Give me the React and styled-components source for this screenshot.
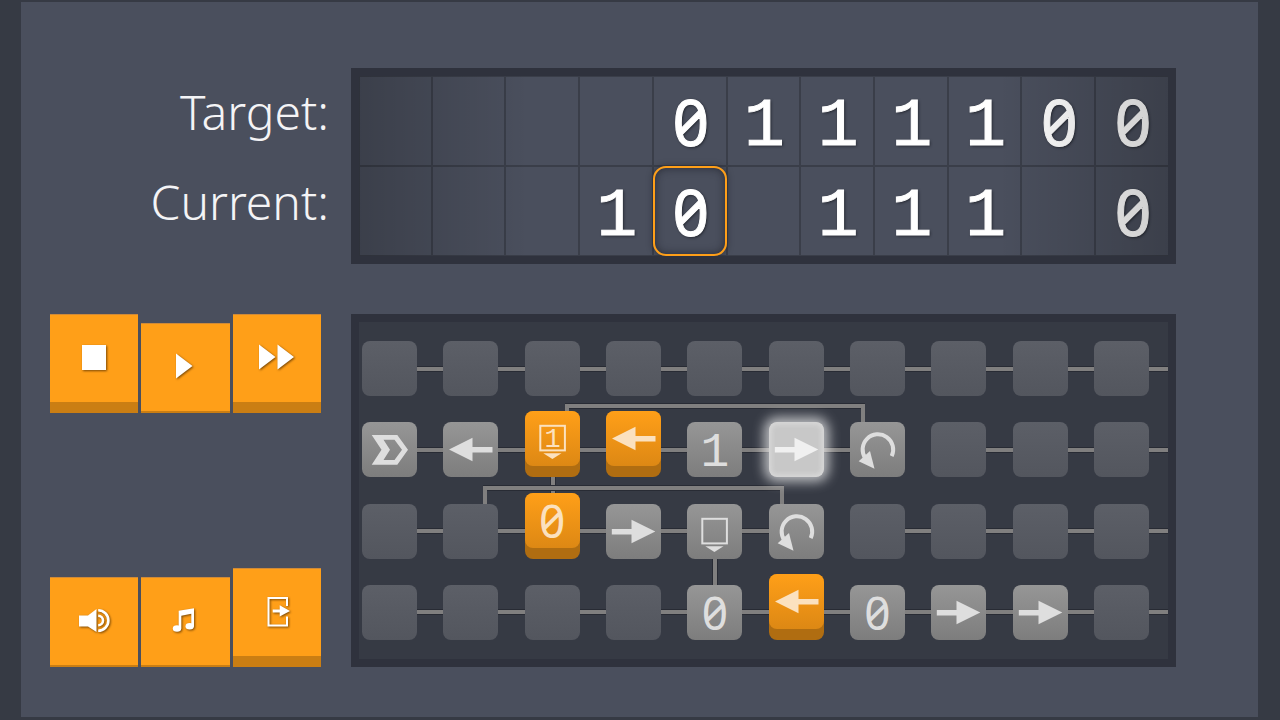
import React, { useState } from 'react'
import styled, { createGlobalStyle, css } from 'styled-components'

const GlobalStyle = createGlobalStyle`
* {
    box-sizing: border-box;
}
body {
    margin: 0;
    background-color: #363a44;
    font-family: "Noto Sans", "Open Sans", sans-serif;
}
`

const Page = styled.div`
    min-height: 100vh;
    padding: 2px 22px 3px 21px;
    display: flex;
`
const Board = styled.main`
    flex: 1;
    display: grid;
    grid-template-columns: 271px minmax(0, 1fr);
    grid-template-rows: auto 1fr;
    column-gap: 30px;
    row-gap: 50px;
    padding: 66px 82px 50px 29px;
    background-color: #4a4f5d;
`
const Labels = styled.div`
    display: flex;
    flex-direction: column;
    align-items: flex-end;
    margin-right: -8px;
`
const Label = styled.span`
    height: 90px;
    line-height: 88px;
    font-size: 48px;
    font-weight: 300;
    color: #f4f4f6;
`
const Panel = styled.section`
    border: 8px solid #2f323d;
`

/* tape */
const TapePanel = styled(Panel)`
    position: relative;
    overflow: hidden;

    &::after {
        content: "";
        position: absolute;
        inset: 0;
        pointer-events: none;
        background:
            linear-gradient(to right, rgba(0, 0, 0, 0.2), rgba(0, 0, 0, 0) 170px),
            linear-gradient(to left, rgba(0, 0, 0, 0.2), rgba(0, 0, 0, 0) 170px);
    }
`
const Tape = styled.table`
    width: calc(100% + 2px);
    table-layout: fixed;
    border-collapse: separate;
    border-spacing: 0;
    border-top: 1px solid #3a3e49;
`
const Cell = styled.td`
    position: relative;
    height: 90px;
    padding: 0;
    border-right: 2px solid #3a3e49;
    border-bottom: 2px solid #3a3e49;
    text-align: center;

    &:first-child {
        border-left: 1px solid #3a3e49;
    }

    tr:last-child > & {
        height: 89px;
        border-bottom-width: 1px;
    }

    ${(p) => p.$head && css`
        &::after {
            content: "";
            position: absolute;
            inset: -1px -1px -1px -1px;
            border: 2px solid #ff9f18;
            border-radius: 13px;
            box-shadow: 0 0 6px rgba(20, 22, 30, 0.5), inset 0 0 8px rgba(20, 22, 30, 0.6);
        }
    `}
`
const Digit = styled.span`
    display: block;
    height: 88px;
    padding-left: 2px;
    font-family: ${(p) => (p.$zero ? '"Noto Sans"' : '"Liberation Mono"')}, monospace;
    font-variant-numeric: slashed-zero;
    font-size: ${(p) => (p.$zero ? 64 : 68)}px;
    line-height: ${(p) => (p.$zero ? 90 : 100)}px;
    color: #fff;
    -webkit-text-stroke: 1px #fff;
    text-shadow: 1px 1px 3px rgba(15, 17, 24, 0.8);
`

/* control buttons */
const Controls = styled.div`
    display: flex;
    flex-direction: column;
    justify-content: space-between;
`
const ControlRow = styled.div`
    display: grid;
    grid-template-columns: repeat(3, 1fr);
    gap: 3px;
    height: 99px;
    align-items: end;
`
const ControlButton = styled.button`
    display: flex;
    align-items: center;
    justify-content: center;
    height: ${(p) => (p.$down ? 90 : 99)}px;
    padding: 0 0 3px;
    border: none;
    border-top: 1px solid #cf8a38;
    border-bottom: ${(p) => (p.$down ? 2 : 11)}px solid #ca7e13;
    background-color: #ff9f18;
    color: #fff;
    cursor: pointer;

    svg {
        width: 40px;
        height: 40px;
        filter: drop-shadow(1px 1px 1px rgba(90, 50, 0, 0.8));
    }
`

/* program */
const ProgramPanel = styled(Panel)`
    display: flex;
    flex-direction: column;
    justify-content: space-between;
    padding: 19px 0 19px 3px;
    background-color: #363a44;
`
const Row = styled.div`
    display: grid;
    grid-template-columns: repeat(9, 1fr) 74px;
    height: 55px;
`
const Slot = styled.div`
    position: relative;
    display: flex;
    align-items: center;
`
const Link = styled.div`
    flex: 1;
    height: 4px;
    background-color: #807f7f;
    box-shadow: 0 -1px 0 #282b34, 0 1px 0 #282b34;
`
const LoopWire = styled.div`
    position: absolute;
    top: -18px;
    left: calc(-100% * ${(p) => p.$span} + 40px);
    width: calc(100% * ${(p) => p.$span} - 25px);
    height: 18px;
    border: 4px solid #807f7f;
    border-bottom: none;
    box-shadow: 0 -1px 0 #282b34, inset 0 1px 0 #282b34;
`
const BranchWire = styled.div`
    position: absolute;
    top: 55px;
    left: 26px;
    width: 4px;
    height: 27px;
    background-color: #807f7f;
    box-shadow: -1px 0 0 #282b34, 1px 0 0 #282b34;
`
const faces = {
    empty: 'linear-gradient(#5c5f67, #53565e)',
    locked: 'linear-gradient(#969696, #7d7d7d)',
    user: 'linear-gradient(#ff9f18, #dd8814)',
    active: '#c8c8c8',
}
const Tile = styled.button`
    position: relative;
    z-index: 1;
    flex: none;
    width: 55px;
    height: ${(p) => (p.$kind === 'user' ? 66 : 55)}px;
    margin-top: ${(p) => (p.$kind === 'user' ? -11 : 0)}px;
    padding: 0;
    border: none;
    border-radius: 8px;
    background-color: ${(p) => (p.$kind === 'user' ? '#b06d11' : 'transparent')};
    color: ${(p) => (p.$kind === 'user' ? '#fbe1bf' : p.$kind === 'active' ? '#f0f0f0' : '#dedede')};
    display: flex;
    align-items: flex-start;
    cursor: pointer;

    ${(p) => p.$kind === 'active' && css`
        box-shadow: 0 0 12px 5px rgba(255, 255, 255, 0.65);
    `}
`
const Face = styled.span`
    display: block;
    width: 55px;
    height: 55px;
    border-radius: 8px;
    background: ${(p) => faces[p.$kind]};
    box-shadow: ${(p) => (p.$kind === 'active' ? 'inset 0 0 4px 3px #d6d6d6' : 'none')};

    svg {
        display: block;
        width: 55px;
        height: 55px;
    }
`
const TileDigit = styled.span`
    display: block;
    height: 55px;
    font-family: ${(p) => (p.$zero ? '"Noto Sans"' : '"Liberation Mono"')}, monospace;
    font-variant-numeric: slashed-zero;
    font-size: ${(p) => (p.$zero ? 46 : 48)}px;
    line-height: ${(p) => (p.$zero ? 55 : 63)}px;
    text-align: center;
`

const ArrowLeft = () => (
    <svg viewBox="0 0 55 55" fill="currentColor">
        <path d="M6 27.5 29.5 15.7V25H49.5V30.6H29.5V39.3Z" />
    </svg>
)
const ArrowRight = () => (
    <svg viewBox="0 0 55 55" fill="currentColor">
        <path d="M49.3 27.5 25.5 15.7V25H5.8V30.6H25.5V39.3Z" />
    </svg>
)
const Start = () => (
    <svg viewBox="0 0 55 55" fill="currentColor" fillRule="evenodd">
        <path d="M9.7 13H35.3L46 27.7 35.3 42.7H9.7L19.5 27.7ZM21.5 17.7H32.5L40 27.7 32.5 38H21.5L28 27.7Z" />
    </svg>
)
const Branch = ({ digit }) => (
    <svg viewBox="0 0 55 55" fill="currentColor">
        <rect x="15.3" y="14.8" width="24.6" height="24.6" fill="none" stroke="currentColor" strokeWidth="2" />
        <path d="M18.3 42.3H36.5L27.4 48Z" />
        {digit && (
            <text x="27.5" y="36" textAnchor="middle" fontFamily="Liberation Mono" fontSize="27">{digit}</text>
        )}
    </svg>
)
const Loop = () => (
    <svg viewBox="0 0 55 55" fill="currentColor">
        <path d="M41.7 34.2A15.3 15.3 0 1 0 15.5 36.5" fill="none" stroke="currentColor" strokeWidth="4" />
        <path d="M8.7 39.3 20 29 24.5 46.8Z" />
    </svg>
)

const StopIcon = () => (
    <svg viewBox="0 0 40 40" fill="currentColor"><rect x="8" y="8" width="24" height="25" /></svg>
)
const PlayIcon = () => (
    <svg viewBox="0 0 40 40" fill="currentColor"><path d="M11 7.5 27.5 20 11 32.5Z" /></svg>
)
const ForwardIcon = () => (
    <svg viewBox="0 0 40 40" fill="currentColor"><path d="M2 7.5 18.5 20 2 32.5ZM20.5 7.5 37 20 20.5 32.5Z" /></svg>
)
const SoundIcon = () => (
    <svg viewBox="0 0 40 40" fill="currentColor">
        <path d="M5 15.5H14L22.5 9V32L14 26.5H5Z" />
        <path d="M24.2 15.7A4.8 4.8 0 0 1 24.2 25.3M24.2 10.3A10.2 10.2 0 0 1 24.2 30.7" fill="none" stroke="currentColor" strokeWidth="2.6" />
    </svg>
)
const MusicIcon = () => (
    <svg viewBox="0 0 40 40" fill="currentColor">
        <ellipse cx="12" cy="28.5" rx="4.2" ry="3.2" />
        <ellipse cx="24.7" cy="26.2" rx="4.2" ry="3.2" />
        <path d="M13.7 10.7 29 8.3V26.2H26.3V13.7L16.3 15.7V28.5H13.7Z" />
    </svg>
)
const ExitIcon = () => (
    <svg viewBox="0 0 40 40" fill="currentColor">
        <path d="M30 15V7H11.5V34.5H30V25.5" fill="none" stroke="currentColor" strokeWidth="2" />
        <path d="M15.7 18.5H22.7V14.3L33 20 22.7 25.5V21.5H15.7Z" />
    </svg>
)

const icons = {
    left: ArrowLeft,
    right: ArrowRight,
    start: Start,
    branch: Branch,
    loop: Loop,
}

const target = ['', '', '', '', '0', '1', '1', '1', '1', '0', '0']
const current = ['', '', '', '1', '0', '', '1', '1', '1', '', '0']
const head = 4

const e = { kind: 'empty' }
const program = [
    [e, e, e, e, e, e, e, e, e, e],
    [
        { kind: 'locked', icon: 'start' },
        { kind: 'locked', icon: 'left' },
        { kind: 'user', icon: 'branch', digit: '1', wire: true },
        { kind: 'user', icon: 'left' },
        { kind: 'locked', digit: '1' },
        { kind: 'active', icon: 'right' },
        { kind: 'locked', icon: 'loop', span: 4, end: true },
        e, e, e,
    ],
    [
        e, e,
        { kind: 'user', digit: '0' },
        { kind: 'locked', icon: 'right' },
        { kind: 'locked', icon: 'branch', wire: true },
        { kind: 'locked', icon: 'loop', span: 4, end: true },
        e, e, e, e,
    ],
    [
        e, e, e, e,
        { kind: 'locked', digit: '0' },
        { kind: 'user', icon: 'left' },
        { kind: 'locked', digit: '0' },
        { kind: 'locked', icon: 'right' },
        { kind: 'locked', icon: 'right' },
        e,
    ],
]

const TapeRow = ({ cells, name, headAt }) => (
    <tr aria-label={name}>
        {cells.map((c, i) => (
            <Cell key={i} $head={i === headAt}>
                {c && <Digit $zero={c === '0'}>{c}</Digit>}
            </Cell>
        ))}
    </tr>
)

const Step = ({ step }) => {
    const Icon = icons[step.icon]
    return (
        <Slot>
            {step.span && <LoopWire $span={step.span} />}
            {step.wire && <BranchWire />}
            <Tile type="button" $kind={step.kind} aria-label={step.icon || step.digit || 'empty'}>
                <Face $kind={step.kind}>
                    {Icon
                        ? <Icon digit={step.digit} />
                        : step.digit && <TileDigit $zero={step.digit === '0'}>{step.digit}</TileDigit>}
                </Face>
            </Tile>
            {!step.end && <Link />}
        </Slot>
    )
}

const App = () => {
    const [mode, setMode] = useState('play')
    const [sound, setSound] = useState(true)
    const [music, setMusic] = useState(true)

    return (
        <>
            <GlobalStyle />
            <Page>
                <Board>
                    <Labels>
                        <Label>Target:</Label>
                        <Label>Current:</Label>
                    </Labels>
                    <TapePanel>
                        <Tape aria-label="Tape">
                            <tbody>
                                <TapeRow name="Target" cells={target} />
                                <TapeRow name="Current" cells={current} headAt={head} />
                            </tbody>
                        </Tape>
                    </TapePanel>

                    <Controls>
                        <ControlRow>
                            <ControlButton aria-label="Stop" $down={mode === 'stop'} onClick={() => setMode('stop')}><StopIcon /></ControlButton>
                            <ControlButton aria-label="Play" $down={mode === 'play'} onClick={() => setMode('play')}><PlayIcon /></ControlButton>
                            <ControlButton aria-label="Fast forward" $down={mode === 'fast'} onClick={() => setMode('fast')}><ForwardIcon /></ControlButton>
                        </ControlRow>
                        <ControlRow>
                            <ControlButton aria-label="Sound" $down={sound} onClick={() => setSound(!sound)}><SoundIcon /></ControlButton>
                            <ControlButton aria-label="Music" $down={music} onClick={() => setMusic(!music)}><MusicIcon /></ControlButton>
                            <ControlButton aria-label="Exit"><ExitIcon /></ControlButton>
                        </ControlRow>
                    </Controls>
                    <ProgramPanel>
                        {program.map((row, i) => (
                            <Row key={i}>
                                {row.map((step, j) => <Step key={j} step={step} />)}
                            </Row>
                        ))}
                    </ProgramPanel>
                </Board>
            </Page>
        </>
    )
}

export default App
